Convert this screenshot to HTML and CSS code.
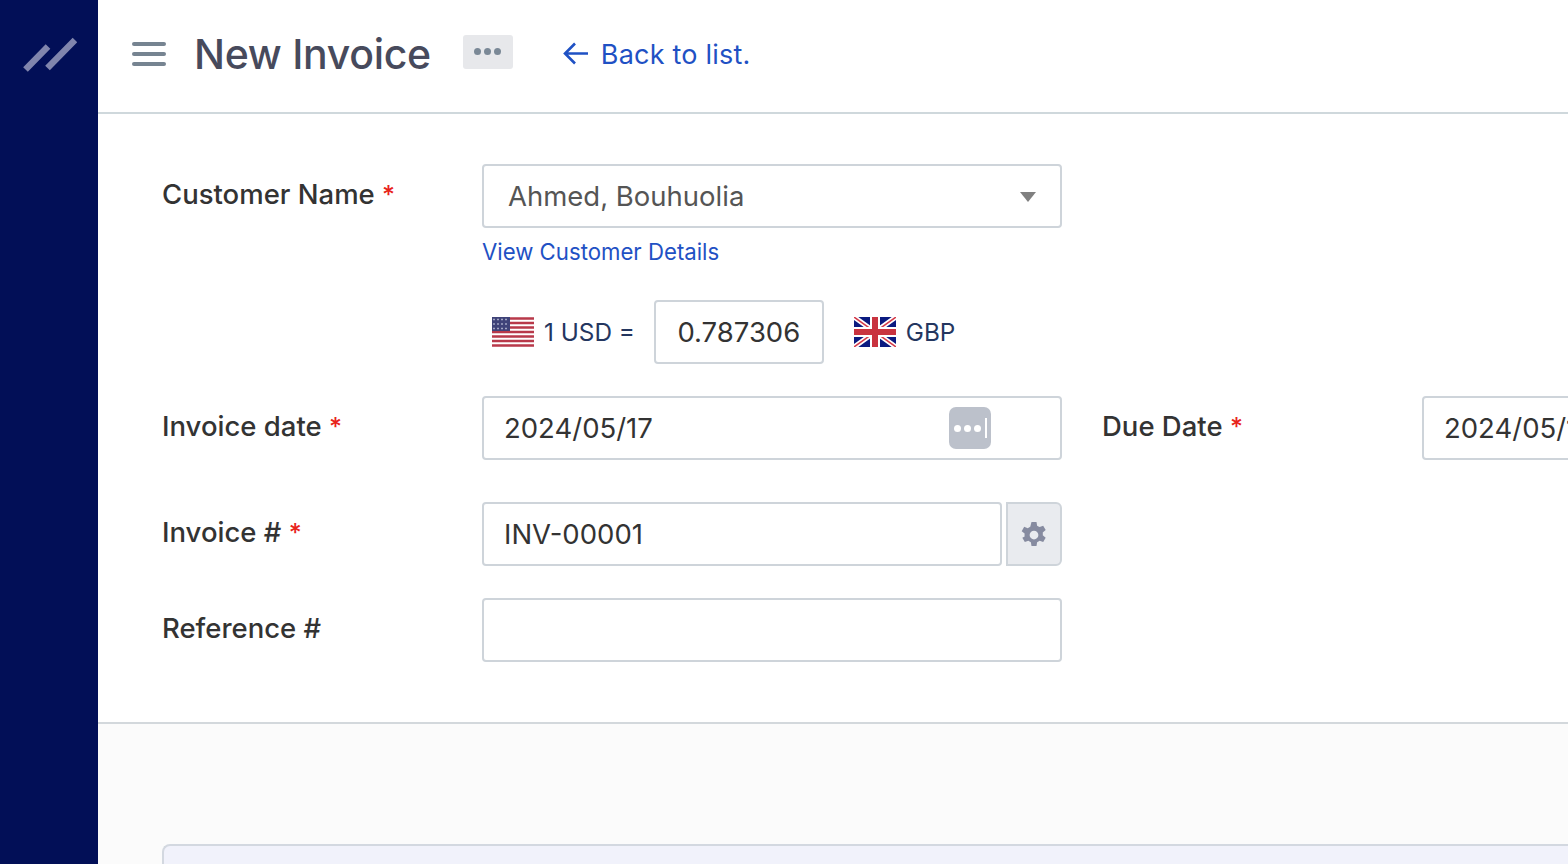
FILE: index.html
```html
<!DOCTYPE html>
<html>
<head>
<meta charset="utf-8">
<title>New Invoice</title>
<link rel="stylesheet" href="styles.css">
</head>
<body>
<div class="app">
  <aside class="sidebar">
    <svg class="logo" width="54" height="36" viewBox="0 0 54 36">
      <path d="M2.500 33.500 L25 10.500 M24.500 32 L52 4" stroke="#8085ad" stroke-width="6.500" fill="none"/>
    </svg>
  </aside>
  <main class="main">
    <header class="topbar">
      <div class="burger"><span></span><span></span><span></span></div>
      <h1 class="title">New Invoice</h1>
      <div class="more"><i></i><i></i><i></i></div>
      <a class="back" href="#">
        <svg width="26" height="26" viewBox="0 0 26 26"><path d="M25 12.500 H2 M12 2.500 L2 12.500 L12 22.500" stroke="#1f51c4" stroke-width="2.600" fill="none"/></svg>
        Back to list.
      </a>
    </header>

    <form class="form">
      <div class="row row-customer">
        <label class="lbl">Customer Name <b>*</b></label>
        <div class="field">
          <div class="box select">Ahmed, Bouhuolia<span class="caret"></span></div>
          <a class="details" href="#">View Customer Details</a>
        </div>
      </div>

      <div class="row row-rate">
        <span class="lbl"></span>
        <div class="rate">
          <svg class="flag" width="42" height="30" viewBox="0 0 42 30">
            <rect width="42" height="30" fill="#fff"/>
            <path d="M0 1.500H42M0 6H42M0 10.500H42M0 15H42M0 19.500H42M0 24H42M0 28.500H42" stroke="#b8394a" stroke-width="2.300"/>
            <rect width="18" height="14" fill="#3f4379"/>
            <path d="M1 2.500H17M1 7H17M1 11.500H17" stroke="#a3a6c4" stroke-width="1.500" stroke-dasharray="2 2"/>
          </svg>
          <span class="rate-txt">1 USD =</span>
          <div class="box rate-val">0.787306</div>
          <svg class="flag flag-gb" width="42" height="30" viewBox="0 0 42 30">
            <rect width="42" height="30" fill="#0b1a80"/>
            <path d="M0 0L42 30M42 0L0 30" stroke="#fff" stroke-width="5"/>
            <path d="M0 0L42 30M42 0L0 30" stroke="#d43b4a" stroke-width="1.500"/>
            <path d="M21 0V30M0 15H42" stroke="#fff" stroke-width="10"/>
            <path d="M21 0V30M0 15H42" stroke="#c9333f" stroke-width="6"/>
          </svg>
          <span class="rate-txt">GBP</span>
        </div>
      </div>

      <div class="row row-date">
        <label class="lbl">Invoice date <b>*</b></label>
        <div class="box date">
          2024/05/17
          <div class="pw"><i></i><i></i><i></i><u></u></div>
        </div>
        <label class="lbl lbl-due">Due Date <b>*</b></label>
        <div class="box due">2024/05/17</div>
      </div>

      <div class="row row-num">
        <label class="lbl">Invoice # <b>*</b></label>
        <div class="box num">INV-00001</div>
        <div class="gear">
          <svg class="gear-ico" width="30" height="30" viewBox="0 0 24 24"><path fill="#868ba0" fill-rule="evenodd" d="M10 1.500h4l.5 3a8 8 0 0 1 2 1.150l2.850-1.100 2 3.450-2.350 1.950a8 8 0 0 1 0 2.300l2.350 1.950-2 3.450-2.850-1.100a8 8 0 0 1-2 1.150l-.5 3h-4l-.5-3a8 8 0 0 1-2-1.150l-2.850 1.100-2-3.450L4.500 13.150a8 8 0 0 1 0-2.300L2.150 8.900l2-3.450L7 6.550a8 8 0 0 1 2-1.150zM12 8.500a3.500 3.500 0 1 0 0 7 3.500 3.500 0 0 0 0-7z"/></svg>
        </div>
      </div>

      <div class="row row-ref">
        <label class="lbl">Reference #</label>
        <div class="box ref"></div>
      </div>
    </form>

    <section class="lower">
      <div class="card"></div>
    </section>
  </main>
</div>
</body>
</html>
```

FILE: styles.css
```css
html, body { margin: 0; padding: 0; height: 100%; overflow: hidden; }
body { font-family: Inter, "Noto Sans", sans-serif; color: #333; background: #fff; }
a { text-decoration: none; color: #1f51c4; }

.app { display: flex; height: 864px; }
.sidebar { width: 98px; flex: none; background: #020f57; display: flex; justify-content: center; align-items: flex-start; padding: 36px 0 0 2px; box-sizing: border-box; }
.main { flex: 1; min-width: 0; display: flex; flex-direction: column; overflow: hidden; }

.topbar { height: 114px; box-sizing: border-box; flex: none; display: flex; align-items: center; border-bottom: 2px solid #cfd8dc; padding: 0 0 4px 34px; }
.burger { width: 34px; display: flex; flex-direction: column; gap: 6px; margin-right: 28px; }
.burger span { height: 4px; border-radius: 2px; background: #768491; }
.title { margin: 0; font-size: 41px; font-weight: 500; letter-spacing: -0.3px; color: #474a5c; white-space: nowrap; }
.more { width: 50px; height: 34px; margin-left: 32px; margin-top: -5px; border-radius: 3px; background: #e7e8eb; display: flex; align-items: center; justify-content: center; gap: 3px; }
.more i { width: 7px; height: 7px; border-radius: 50%; background: #7a8896; }
.back { display: flex; align-items: center; gap: 12px; margin-left: 50px; font-size: 27px; letter-spacing: 0.2px; white-space: nowrap; }

.form { height: 610px; flex: none; box-sizing: border-box; padding: 50px 0 0 64px; border-bottom: 2px solid #d3d8dc; }
.row { display: flex; align-items: flex-start; white-space: nowrap; }
.row-rate { margin-top: 33px; }
.row-date { margin-top: 32px; }
.row-num { margin-top: 42px; }
.row-ref { margin-top: 32px; }
.lbl { width: 320px; flex: none; font-size: 27.500px; font-weight: 500; color: #333; line-height: 61px; }
.lbl b { color: #e8231b; font-weight: 500; font-size: 25px; }
.lbl-due { margin-left: 40px; }

.box { box-sizing: border-box; flex: none; height: 64px; border: 2px solid #ced4da; border-radius: 4px; background: #fff; font-size: 27.500px; line-height: 60px; padding-left: 20px; color: #333; }
.select { width: 580px; position: relative; padding-left: 24px; color: #555; }
.caret { position: absolute; right: 24px; top: 26px; border-left: 8px solid transparent; border-right: 8px solid transparent; border-top: 10px solid #808080; }
.details { display: block; margin-top: 9px; font-size: 22.200px; line-height: 30px; }

.rate { display: flex; align-items: center; height: 64px; padding-left: 10px; }
.rate-txt { font-size: 24.300px; color: #24365f; }
.flag { display: block; margin-right: 10px; }
.rate-val { width: 170px; margin: 0 30px 0 19px; text-align: center; padding-left: 0; }

.date { width: 580px; position: relative; }
.pw { position: absolute; left: 465px; top: 9px; width: 42px; height: 42px; border-radius: 7px; background: #bcc1cb; display: flex; align-items: center; padding-left: 5px; box-sizing: border-box; gap: 3px; }
.pw i { width: 7px; height: 7px; border-radius: 50%; background: #fff; }
.pw u { width: 2px; height: 20px; background: #fff; margin-left: 1px; }
.due { width: 300px; }

.num { width: 520px; }
.gear { box-sizing: border-box; width: 56px; height: 64px; margin-left: 4px; border: 2px solid #ced4da; border-radius: 0 6px 6px 0; background: #e9ebef; display: flex; align-items: center; justify-content: center; }
.gear-ico { margin-top: 1px; }
.ref { width: 580px; }

.lower { flex: 1; background: #fbfbfb; padding: 120px 0 0 64px; }
.card { height: 100px; background: #f1f2fb; border: 2px solid #d3d8e0; border-right: 0; border-radius: 8px 0 0 0; }
```
